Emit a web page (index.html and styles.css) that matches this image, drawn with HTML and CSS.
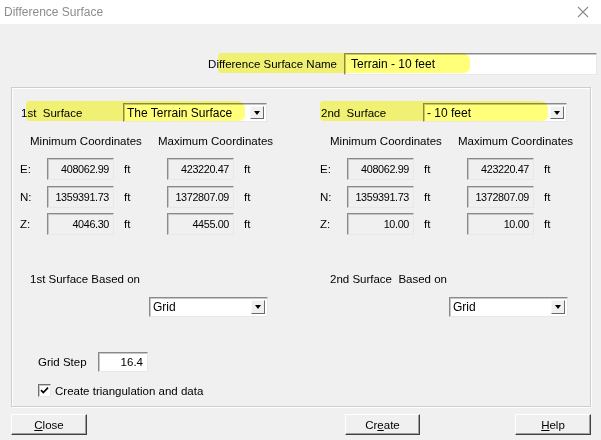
FILE: index.html
```html
<!DOCTYPE html>
<html>
<head>
<meta charset="utf-8">
<link rel="stylesheet" href="styles.css">
</head>
<body>
<div class="window">
  <div class="titlebar">
    <span class="title">Difference Surface</span>
    <svg class="close-x" width="12" height="12" viewBox="0 0 12 12"><path d="M1 1L11 11M11 1L1 11" stroke="#8a8a8a" stroke-width="1.1" fill="none"/></svg>
  </div>
  <div class="dialog">
    <div class="name-row">
      <span class="name-label">Difference Surface Name</span>
      <div class="textbox name-box">Terrain - 10 feet</div>
    </div>

    <div class="group">
      <div class="col">
        <div class="surface-row">
          <span class="surface-label">1st&nbsp; Surface</span>
          <div class="combo surface-combo"><span class="combo-text">The Terrain Surface</span><span class="combo-btn"><i class="tri"></i></span></div>
        </div>
        <div class="coord-head"><span class="head-min">Minimum Coordinates</span><span class="head-max">Maximum Coordinates</span></div>
        <div class="coords">
          <span class="axis">E:</span><div class="ro">408062.99</div><span class="unit">ft</span><div class="ro">423220.47</div><span class="unit">ft</span>
          <span class="axis">N:</span><div class="ro">1359391.73</div><span class="unit">ft</span><div class="ro">1372807.09</div><span class="unit">ft</span>
          <span class="axis">Z:</span><div class="ro">4046.30</div><span class="unit">ft</span><div class="ro">4455.00</div><span class="unit">ft</span>
        </div>
        <div class="based-label">1st Surface Based on</div>
        <div class="combo based-combo"><span class="combo-text">Grid</span><span class="combo-btn"><i class="tri"></i></span></div>
        <div class="step-row">
          <span class="step-label">Grid Step</span>
          <div class="textbox step-box">16.4</div>
        </div>
        <div class="check-row">
          <span class="checkbox"><svg width="9" height="9" viewBox="0 0 9 9"><path d="M1 4.2L3.3 6.6L8 1.6" stroke="#000" stroke-width="1.7" fill="none"/></svg></span>
          <span class="check-label">Create triangulation and data</span>
        </div>
      </div>
      <div class="col">
        <div class="surface-row">
          <span class="surface-label">2nd&nbsp; Surface</span>
          <div class="combo surface-combo"><span class="combo-text">- 10 feet</span><span class="combo-btn"><i class="tri"></i></span></div>
        </div>
        <div class="coord-head"><span class="head-min">Minimum Coordinates</span><span class="head-max">Maximum Coordinates</span></div>
        <div class="coords">
          <span class="axis">E:</span><div class="ro">408062.99</div><span class="unit">ft</span><div class="ro">423220.47</div><span class="unit">ft</span>
          <span class="axis">N:</span><div class="ro">1359391.73</div><span class="unit">ft</span><div class="ro">1372807.09</div><span class="unit">ft</span>
          <span class="axis">Z:</span><div class="ro">10.00</div><span class="unit">ft</span><div class="ro">10.00</div><span class="unit">ft</span>
        </div>
        <div class="based-label">2nd Surface&nbsp; Based on</div>
        <div class="combo based-combo"><span class="combo-text">Grid</span><span class="combo-btn"><i class="tri"></i></span></div>
      </div>
    </div>

    <div class="buttons">
      <button class="btn btn-close"><u>C</u>lose</button>
      <button class="btn btn-create">Cr<u>e</u>ate</button>
      <button class="btn btn-help"><u>H</u>elp</button>
    </div>
  </div>

  <div class="hl hl-name"></div>
  <div class="hl hl-first"></div>
  <div class="hl hl-second"></div>
</div>
</body>
</html>
```

FILE: styles.css
```css
* { box-sizing: border-box; }
html, body { margin: 0; padding: 0; }
body {
  width: 601px;
  height: 440px;
  overflow: hidden;
  background: #f0f0f0;
  font-family: "Liberation Sans", Arial, sans-serif;
  font-size: 11.5px;
  color: #000;
}
.window { position: relative; width: 601px; height: 440px; overflow: hidden; }

.titlebar {
  height: 24px;
  background: #fff;
  display: flex;
  align-items: center;
  justify-content: space-between;
  padding: 0 12px 0 4px;
}
.title { color: #8c8c8c; font-size: 12px; }
.close-x { display: block; }

.dialog {
  background: #f0f0f0;
  height: 416px;
  padding: 29px 0 0 11px;
}

.name-row {
  display: flex;
  justify-content: flex-end;
  align-items: center;
  gap: 7px;
  padding-right: 4px;
  height: 22px;
}
.textbox {
  background: #fff;
  border: 1px solid;
  border-color: #8a8a8a #e8e8e8 #e8e8e8 #8a8a8a;
  box-shadow: inset 1px 1px 0 #c6c6c6;
  display: flex;
  align-items: center;
}
.name-box { width: 253px; height: 22px; padding-left: 6px; font-size: 12px; }

.group {
  margin-top: 12px;
  width: 580px;
  height: 320px;
  border: 1px solid #cdcdcd;
  box-shadow: inset 1px 1px 0 #fff, 1px 1px 0 #fff;
  display: grid;
  grid-template-columns: 300px 1fr;
  padding-top: 15px;
}
.col { padding-left: 8px; display: flex; flex-direction: column; align-items: flex-start; }

.surface-row { display: flex; align-items: center; height: 19px; }
.surface-label { width: 103px; padding-left: 1px; }
.combo {
  background: #fff;
  border: 1px solid;
  border-color: #8a8a8a #e8e8e8 #e8e8e8 #8a8a8a;
  box-shadow: inset 1px 1px 0 #c6c6c6;
  display: flex;
  align-items: stretch;
  justify-content: space-between;
  padding: 2px 2px 2px 3px;
  font-size: 12px;
}
.surface-combo { width: 144px; height: 19px; }
.combo-text { display: flex; align-items: center; }
.combo-btn {
  width: 14px;
  background: #f0f0f0;
  border: 1px solid;
  border-color: #f8f8f8 #6a6a6a #6a6a6a #f8f8f8;
  display: flex;
  align-items: center;
  justify-content: center;
}
.tri {
  width: 0; height: 0;
  border-left: 3.5px solid transparent;
  border-right: 3.5px solid transparent;
  border-top: 4px solid #000;
}

.coord-head { display: flex; height: 14px; margin-top: 12px; align-items: center; padding-left: 10px; }
.head-min { width: 128px; }

.coords {
  margin-top: 10px;
  display: grid;
  grid-template-columns: 27px 67px 53px 67px 20px;
  grid-auto-rows: 22px;
  row-gap: 5.5px;
  align-items: center;
}
.unit { padding-left: 10px; }
.ro {
  height: 22px;
  border: 1px solid;
  border-color: #8a8a8a #e8e8e8 #e8e8e8 #8a8a8a;
  box-shadow: inset 1px 1px 0 #c6c6c6;
  display: flex;
  align-items: center;
  justify-content: flex-end;
  padding-right: 4px;
  font-size: 10.8px;
  letter-spacing: -0.35px;
}

.based-label { margin-top: 37px; padding-left: 10px; height: 14px; line-height: 14px; }
.based-combo { width: 119px; height: 20px; margin-top: 11px; margin-left: 129px; }

.step-row { display: flex; align-items: center; margin-top: 35px; padding-left: 18px; }
.step-label { width: 60px; }
.step-box { width: 50px; height: 20px; justify-content: flex-end; padding-right: 4px; }

.check-row { display: flex; align-items: center; margin-top: 12px; padding-left: 18px; }
.checkbox {
  width: 13px; height: 13px;
  background: #fff;
  border: 1px solid;
  border-color: #707070 #e8e8e8 #e8e8e8 #707070;
  box-shadow: inset 1px 1px 0 #c6c6c6;
  display: flex; align-items: center; justify-content: center;
  margin-right: 4px;
}
.checkbox svg { display: block; }

.buttons { display: flex; margin-top: 7px; }
.btn {
  font-family: inherit;
  font-size: 11.5px;
  height: 21px;
  background: #f0f0f0;
  border: 1px solid;
  border-color: #fff #404040 #404040 #fff;
  box-shadow: inset -1px -1px 0 #a0a0a0;
  padding: 0;
  color: #000;
}
.btn-close { width: 76px; }
.btn-create { width: 75px; margin-left: 258px; }
.btn-help { width: 76px; margin-left: 95px; }

.hl {
  position: absolute;
  background: rgba(255, 255, 40, 0.62);
  mix-blend-mode: multiply;
  border-radius: 3px 8px 6px 4px;
}
.hl-name { left: 218px; top: 53px; width: 252px; height: 20px; }
.hl-first { left: 26px; top: 101px; width: 219px; height: 20px; }
.hl-second { left: 320px; top: 101px; width: 228px; height: 20px; }
```
